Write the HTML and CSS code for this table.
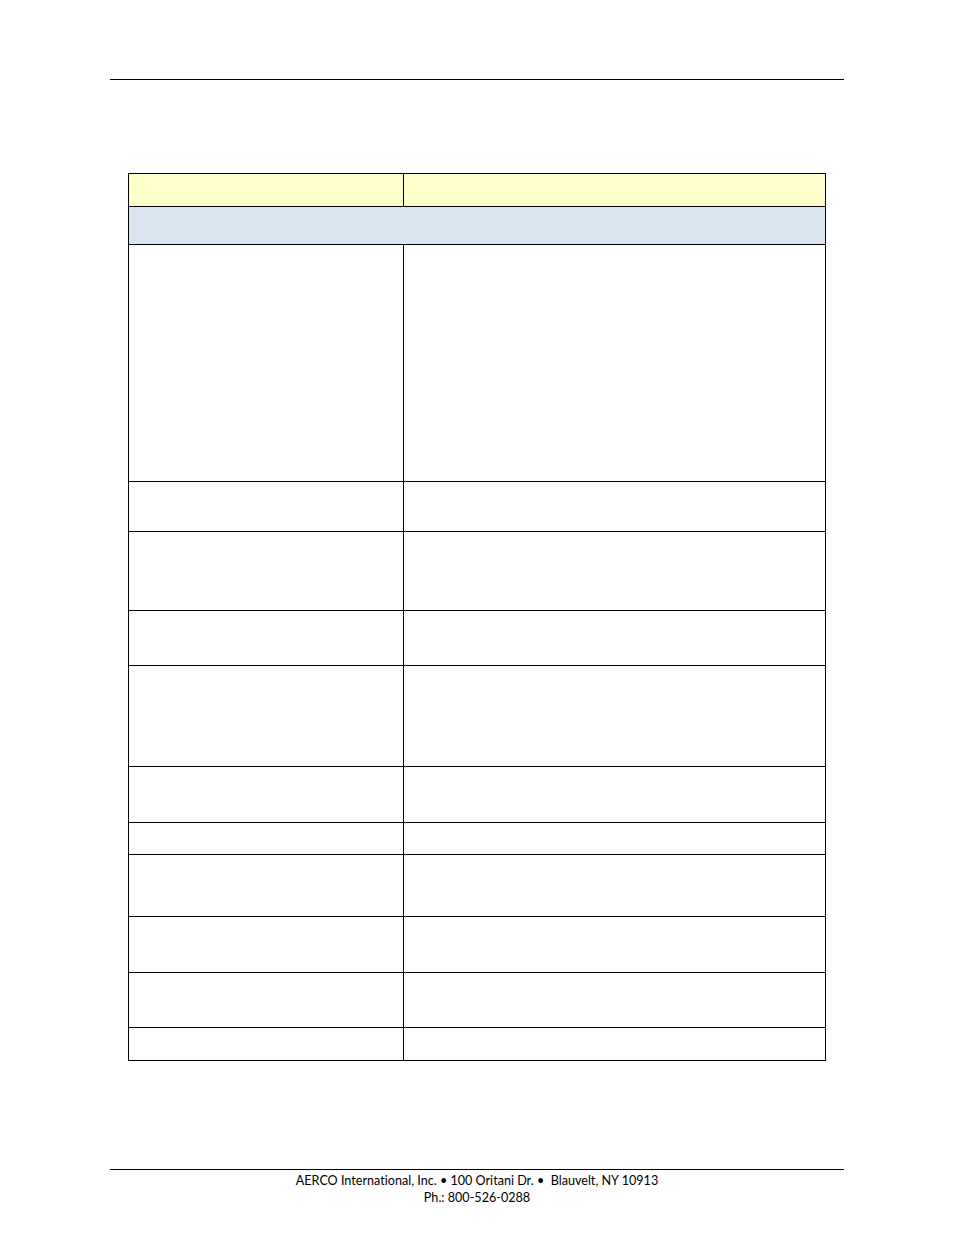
FILE: index.html
```html
<!DOCTYPE html>
<html>
<head>
<meta charset="utf-8">
<link rel="stylesheet" href="styles.css">
</head>
<body>
<div class="page">
  <div class="rule"></div>
  <div class="tbl">
    <div class="row head h33"><div class="c1"></div><div class="c2"></div></div>
    <div class="row section h38"><div class="span"></div></div>
    <div class="row h237"><div class="c1"></div><div class="c2"></div></div>
    <div class="row h50"><div class="c1"></div><div class="c2"></div></div>
    <div class="row h79"><div class="c1"></div><div class="c2"></div></div>
    <div class="row h55"><div class="c1"></div><div class="c2"></div></div>
    <div class="row h101"><div class="c1"></div><div class="c2"></div></div>
    <div class="row h56"><div class="c1"></div><div class="c2"></div></div>
    <div class="row h32"><div class="c1"></div><div class="c2"></div></div>
    <div class="row h62"><div class="c1"></div><div class="c2"></div></div>
    <div class="row h56"><div class="c1"></div><div class="c2"></div></div>
    <div class="row h55"><div class="c1"></div><div class="c2"></div></div>
    <div class="row h33"><div class="c1"></div><div class="c2"></div></div>
  </div>
  <div class="rule foot-rule"></div>
  <div class="footer">
    <div>AERCO International, Inc. &bull; 100 Oritani Dr. &bull;&nbsp; Blauvelt, NY 10913</div>
    <div>Ph.: 800-526-0288</div>
  </div>
</div>
</body>
</html>
```

FILE: styles.css
```css
html, body {
  margin: 0;
  padding: 0;
  background: #ffffff;
}
.page {
  width: 954px;
  height: 1235px;
  padding-top: 79px;
  box-sizing: border-box;
  font-family: Lato, "Open Sans", "Liberation Sans", sans-serif;
  color: #000;
}
.rule {
  margin-left: 110px;
  width: 734px;
  border-top: 1px solid #000;
}
.tbl {
  margin-top: 93px;
  margin-left: 128px;
  width: 698px;
  box-sizing: border-box;
  border: 1px solid #000;
  border-bottom: none;
}
.row {
  display: flex;
  box-sizing: border-box;
  border-bottom: 1px solid #000;
}
.c1 {
  width: 274px;
  flex: none;
  border-right: 1px solid #000;
}
.c2 {
  flex: 1;
}
.span {
  flex: 1;
}
.head {
  background: #ffffcc;
}
.section {
  background: #dbe5f1;
}
.h32 { height: 32px; }
.h33 { height: 33px; }
.h38 { height: 38px; }
.h50 { height: 50px; }
.h55 { height: 55px; }
.h56 { height: 56px; }
.h62 { height: 62px; }
.h79 { height: 79px; }
.h101 { height: 101px; }
.h237 { height: 237px; }
.foot-rule {
  margin-top: 108px;
}
.footer {
  margin-top: 2px;
  text-align: center;
  font-size: 12.6px;
  line-height: 17px;
  font-variant-ligatures: none;
}
```
